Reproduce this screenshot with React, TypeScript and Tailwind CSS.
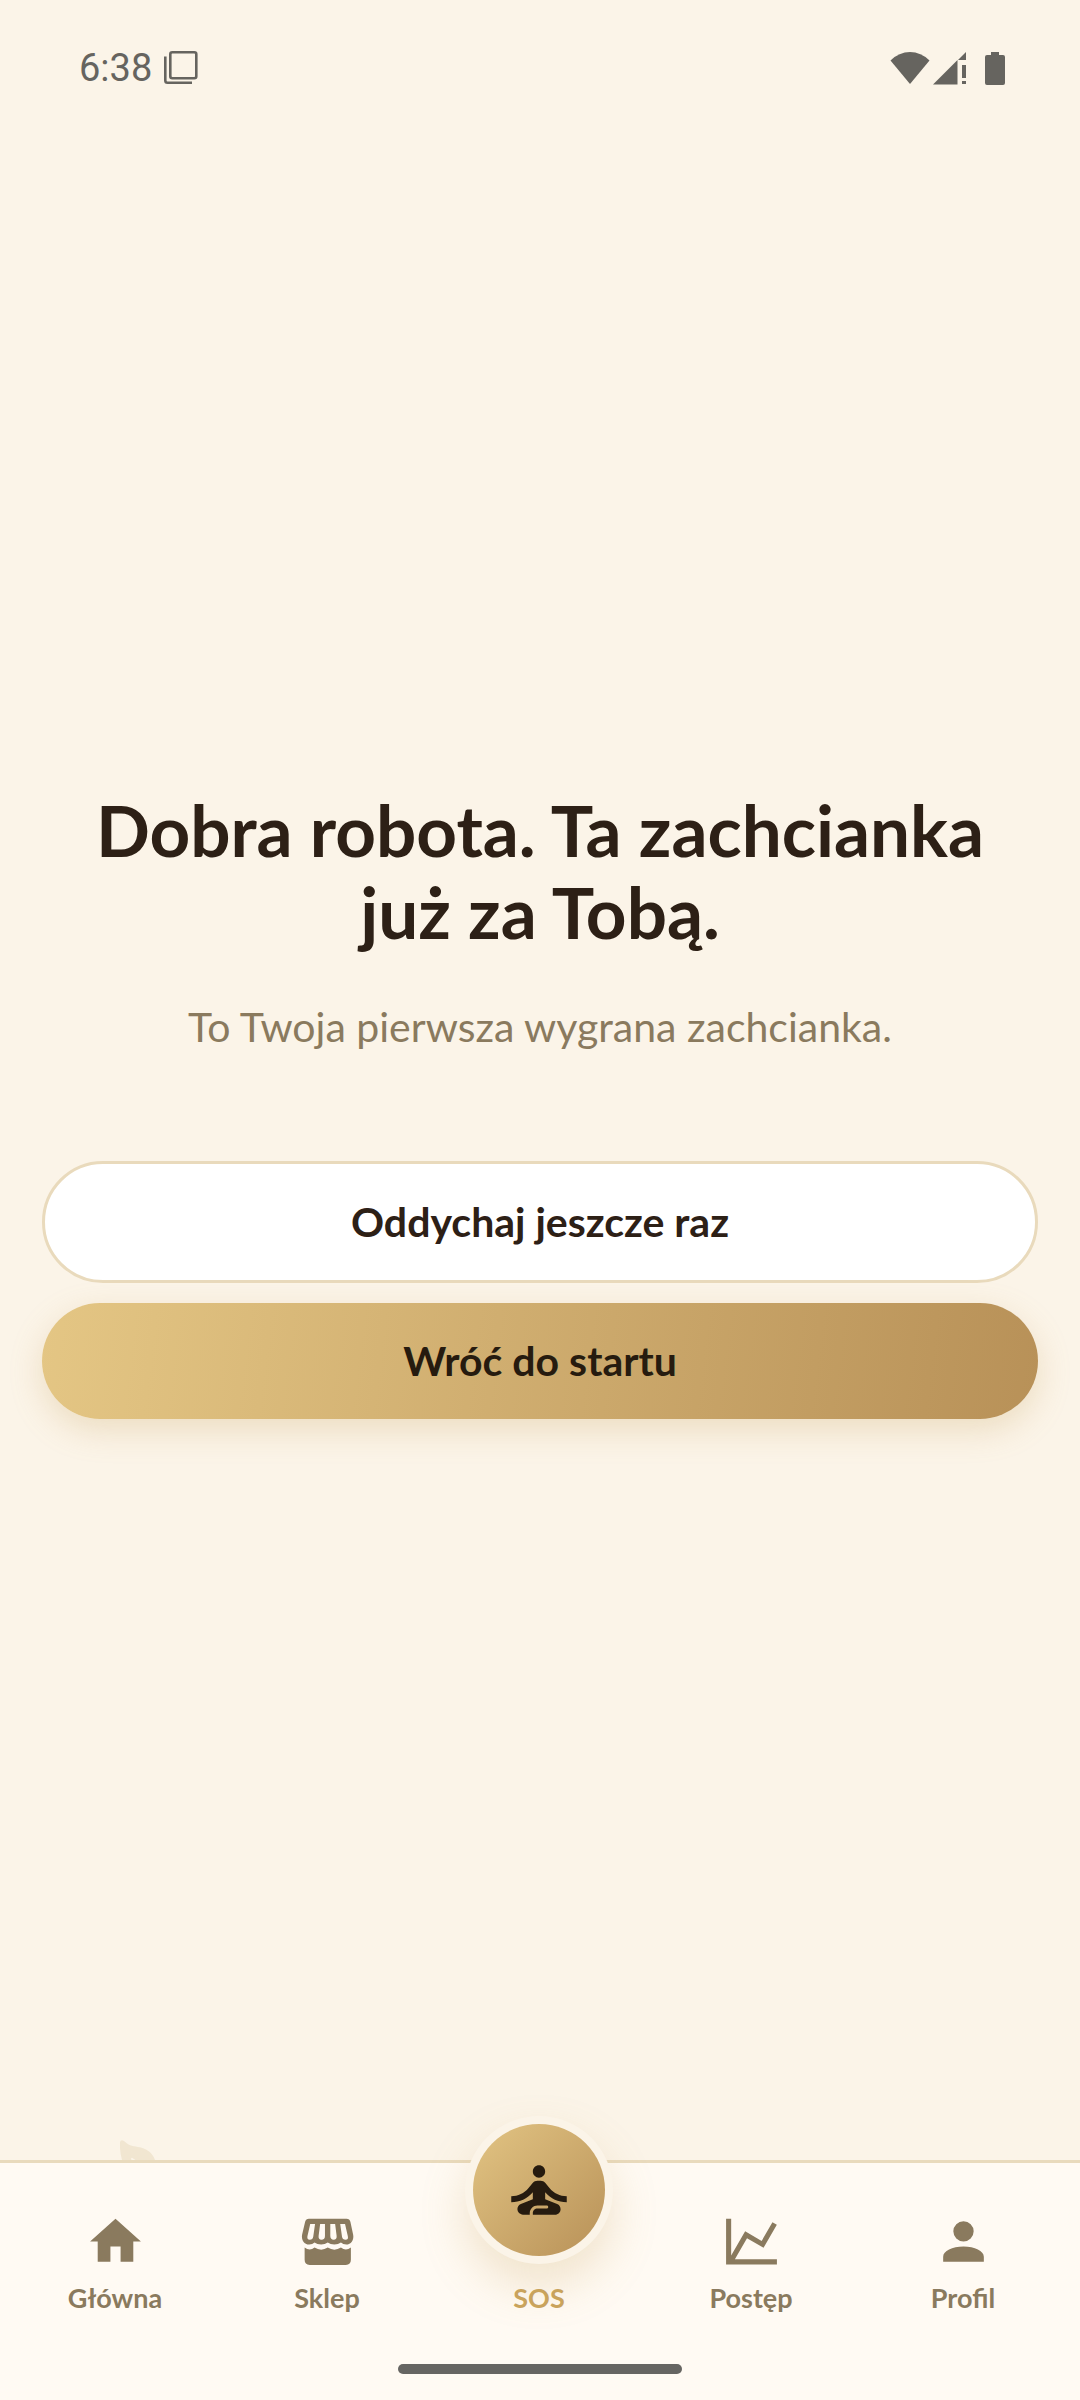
import type { ReactNode } from 'react';

function Icon({ children, className = 'size-[61px]' }: { children: ReactNode; className?: string }) {
  return (
    <svg viewBox="0 0 24 24" className={className} fill="currentColor" aria-hidden="true">
      {children}
    </svg>
  );
}

const HomeIcon = () => (
  <Icon>
    <path d="M10 20V14H14V20H19V12H22L12 3 2 12H5V20Z" />
  </Icon>
);

const StoreIcon = () => (
  <Icon>
    <path
      fillRule="evenodd"
      d="M4.7 3H19.5Q20.7 3 21 4.2L22.1 9.3C22.5 11.4 21.2 13.2 19.4 13.2Q18.1 13.2 17.3 12.4Q16.2 13.2 14.7 13.2Q13.1 13.2 12.1 12.4Q11 13.2 9.5 13.2Q7.9 13.2 6.9 12.4Q6.1 13.2 4.8 13.2C2.9 13.2 1.6 11.4 2 9.3L3.2 4.2Q3.5 3 4.7 3ZM5.2 5.1 4.1 9.9Q3.9 11.3 5 11.3Q6.2 11.3 6.4 10L7.1 5.1ZM9.1 5.1 8.5 9.8Q8.4 11.3 9.6 11.3Q11 11.3 11 9.8V5.1ZM13.1 5.1V9.8Q13.2 11.3 14.4 11.3Q15.7 11.3 15.6 9.8L15 5.1ZM17 5.1 17.7 10Q17.9 11.3 19.1 11.3Q20.3 11.3 20 9.9L18.9 5.1Z"
    />
    <path d="M3 14.4Q5 15.9 6.9 14.4Q9.5 16 12.1 14.4Q14.7 16 17.3 14.4Q19.2 15.9 21.2 14.4V19.2Q21.2 21.2 19.2 21.2H5Q3 21.2 3 19.2Z" />
  </Icon>
);

const ChartIcon = () => (
  <Icon>
    <path d="M16 11.78 20.24 4.45 21.97 5.45 16.74 14.5 10.23 10.75 5.46 19H22V21H2V3H4V17.54L9.5 8Z" />
  </Icon>
);

const ProfileIcon = () => (
  <Icon>
    <path d="M12 4A4 4 0 0 1 16 8 4 4 0 0 1 12 12 4 4 0 0 1 8 8 4 4 0 0 1 12 4M12 14C16.42 14 20 15.79 20 18V20H4V18C4 15.79 7.58 14 12 14Z" />
  </Icon>
);

const MeditationIcon = () => (
  <Icon className="size-[74px]">
    <path d="M12 4C13.11 4 14 4.89 14 6S13.11 8 12 8 10 7.11 10 6 10.9 4 12 4M21 16V14C18.76 14 16.84 13.04 15.4 11.32L14.06 9.72C13.68 9.26 13.12 9 12.53 9H11.5C10.89 9 10.33 9.26 9.95 9.72L8.61 11.32C7.16 13.04 5.24 14 3 14V16C5.77 16 8.19 14.83 10 12.75V15L6.12 16.55C5.45 16.82 5 17.5 5 18.2C5 19.2 5.8 20 6.79 20H9V19.5C9 18.12 10.12 17 11.5 17H14.5C14.78 17 15 17.22 15 17.5S14.78 18 14.5 18H11.5C10.67 18 10 18.67 10 19.5V20H17.2C18.2 20 19 19.2 19 18.21C19 17.5 18.55 16.82 17.88 16.56L14 15V12.75C15.81 14.83 18.23 16 21 16Z" />
  </Icon>
);

function StatusBar() {
  return (
    <header className="flex h-[136px] items-center justify-between pr-[75px] pl-[79px] text-[#66645f]">
      <div className="flex items-center gap-3">
        <span className="font-[Roboto,sans-serif] text-[38px] leading-[48px]">6:38</span>
        <svg viewBox="0 0 34 34" className="size-[34px]" fill="none" stroke="currentColor" strokeWidth="2.6" aria-hidden="true">
          <rect x="6.3" y="1.3" width="26" height="26" rx="2" />
          <path d="M1.3 5.5V29.5Q1.3 31.7 3.5 31.7H28" />
        </svg>
      </div>
      <div className="flex items-center gap-[3px]">
        <svg viewBox="0 0 40 34" className="h-[34px] w-[40px]" fill="currentColor" aria-hidden="true">
          <path d="M20 33 0.5 9.5Q9 1 20 1T39.5 9.5Z" />
        </svg>
        <svg viewBox="0 0 33 34" className="h-[34px] w-[33px]" fill="currentColor" aria-hidden="true">
          <path d="M0 33.5 24.5 9V33.5ZM25 9 33 1V9ZM29 14H33V27H29ZM29 30H33V33H29Z" />
        </svg>
        <svg viewBox="0 0 20 34" className="ml-4 h-[34px] w-[20px]" fill="currentColor" aria-hidden="true">
          <path d="M6 1H14V4H18Q20 4 20 6V32Q20 34 18 34H2Q0 34 0 32V6Q0 4 2 4H6Z" />
        </svg>
      </div>
    </header>
  );
}

function NavItem({ label, icon }: { label: string; icon: ReactNode }) {
  return (
    <a href="#" className="flex flex-col items-center pt-[48px] text-[#8a7a5e]">
      {icon}
      <span className="mt-2 text-[27px] leading-[36px] font-bold">{label}</span>
    </a>
  );
}

export default function App() {
  return (
    <div className="flex min-h-screen flex-col bg-[#fbf4e8] font-[Lato,sans-serif] text-[#2d2016]">
      <StatusBar />
      <main className="relative flex flex-1 flex-col items-stretch justify-center px-[42px] pb-[88px] text-center">
        <h1 className="px-10 text-[71px] leading-[82px] font-bold">Dobra robota. Ta zachcianka już za Tobą.</h1>
        <p className="mt-[46px] text-[41px] leading-[56px] text-[#8a7a5e]">To Twoja pierwsza wygrana zachcianka.</p>
        <div className="mt-[106px] flex flex-col gap-5 text-[41px] leading-[56px] font-bold">
          <button type="button" className="rounded-full border-[3px] border-[#e9dabc] bg-white py-[30px]">
            Oddychaj jeszcze raz
          </button>
          <button
            type="button"
            className="rounded-full bg-[linear-gradient(97deg,#e4c684,#b89158)] py-[30px] text-[#261b0f] shadow-[0_11px_32px_rgba(201,163,92,0.28)]"
          >
            Wróć do startu
          </button>
        </div>
        <svg viewBox="0 0 36 20" className="absolute bottom-0 left-[120px] h-[20px] w-[36px]" fill="#f1e6d1" aria-hidden="true">
          <path
            fillRule="evenodd"
            d="M0 2Q1-1 4 1C8 5 12 6 18 7C26 8 33 13 35 20H15.5L12 17.8Q10.5 18 11.5 20H2Q-0.5 11 0 2Z"
          />
        </svg>
      </main>
      <footer className="border-t-[3px] border-[#e9dabc] bg-[#fffaf3]">
        <nav className="grid grid-cols-5 pr-[11px] pl-[9px]">
          <NavItem label="Główna" icon={<HomeIcon />} />
          <NavItem label="Sklep" icon={<StoreIcon />} />
          <a href="#" className="-mt-[47px] flex flex-col items-center text-[#c9a35c]" aria-current="page">
            <span className="relative flex size-[148px] items-center justify-center rounded-full bg-[#fbf4e8] p-2 shadow-[0_22px_44px_rgba(201,163,92,0.25)]">
              <span className="flex size-full items-center justify-center rounded-full bg-[linear-gradient(135deg,#e2c483,#b89158)] text-[#261b0f]">
                <MeditationIcon />
              </span>
            </span>
            <span className="relative mt-4 text-[27px] leading-[36px] font-bold">SOS</span>
          </a>
          <NavItem label="Postęp" icon={<ChartIcon />} />
          <NavItem label="Profil" icon={<ProfileIcon />} />
        </nav>
        <div className="mx-auto mt-12 mb-[26px] h-[10px] w-[284px] rounded-full bg-[#666562]" />
      </footer>
    </div>
  );
}
